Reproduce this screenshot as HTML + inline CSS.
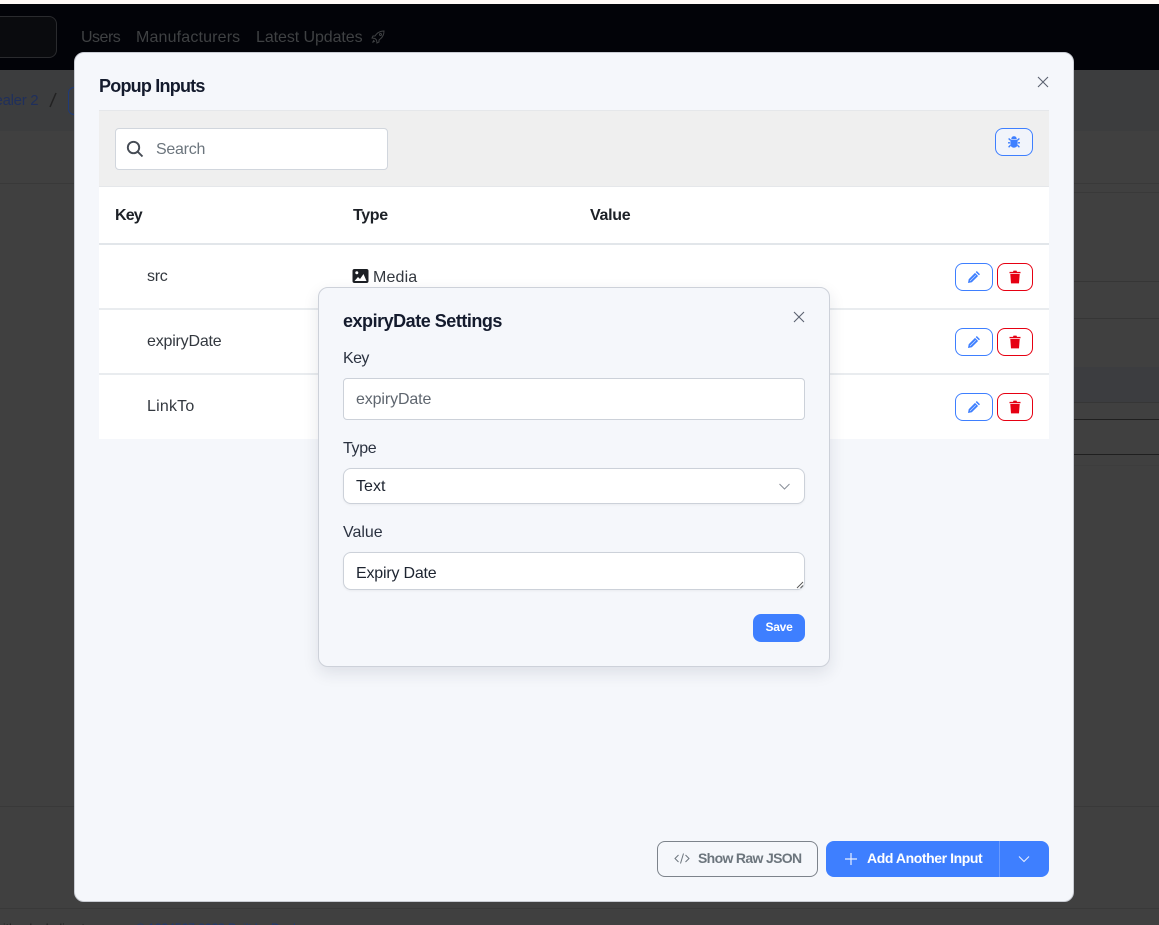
<!DOCTYPE html>
<html><head><meta charset="utf-8"><style>
html,body{margin:0;padding:0;width:1159px;height:925px;overflow:hidden;background:#404040}
body{position:relative;font-family:"Liberation Sans",sans-serif;font-size:16px;color:#212529}
.a,.t{position:absolute}
.t{white-space:nowrap;line-height:20px}
svg{display:block;position:absolute}
.bg{position:absolute;left:0;width:1159px}
.btn{position:absolute;box-sizing:border-box;background:#fff;width:38px;height:28px;border-radius:8px}
.blue{border:1px solid #3e7fff}
.red{border:1px solid #e60012}
.hr{position:absolute;left:99px;width:950px;height:2px;background:#e9ecef}
.lab{color:#2b3240;font-size:16px}
</style></head><body>
<div class="bg" style="top:0;height:4px;background:#fffaf6"></div>
<div class="bg" style="top:4px;height:66px;background:#020308"></div>
<div class="a" style="left:-20px;top:16px;width:75px;height:40px;border:1px solid #2a2b2e;border-radius:8px;background:#0a0b0e"></div>
<div class="t" style="left:81px;top:28px;color:#3f4143;letter-spacing:-.5px">Users</div>
<div class="t" style="left:136px;top:28px;color:#3f4143;letter-spacing:.16px">Manufacturers</div>
<div class="t" style="left:256px;top:28px;color:#3f4143;letter-spacing:-.08px">Latest Updates</div>
<svg style="left:371px;top:30px" width="14" height="14" viewBox="0 0 14 14" fill="none" stroke="#3f4143" stroke-width="1"><path d="M13 1C9 1 6 3 4 6L2 6 1 8 4 8.500 5.500 10 6 13 8 12 8 10C11 8 13 5 13 1Z"/><circle cx="9.500" cy="4.500" r="1"/><path d="M3 10 1.500 12.500 4 11"/></svg>
<div class="bg" style="top:70px;height:61px;background:#3c3d3e"></div>
<div class="t" style="left:-16px;top:91px;font-size:15px;color:#1f2f5c;letter-spacing:-.3px">Dealer 2</div>
<svg style="left:48px;top:91px" width="10" height="18" viewBox="0 0 10 18"><path d="M2 16 8 2" stroke="#222" stroke-width="1.500"/></svg>
<div class="a" style="left:68px;top:87px;width:20px;height:26px;border:1px solid #1f3a78;border-radius:6px"></div>
<div class="bg" style="top:183px;height:1px;background:#393939"></div>
<div class="bg" style="left:1074px;width:85px;top:192px;height:1px;background:#393939"></div>
<div class="bg" style="left:1074px;width:85px;top:281px;height:1px;background:#363636"></div>
<div class="bg" style="left:1074px;width:85px;top:318px;height:1px;background:#363636"></div>
<div class="bg" style="left:1074px;width:85px;top:367px;height:35px;background:#3c3d40"></div>
<div class="bg" style="left:1074px;width:85px;top:402px;height:1px;background:#363636"></div>
<div class="bg" style="left:1074px;width:85px;top:419px;height:1px;background:#1f1f1f"></div>
<div class="bg" style="left:1074px;width:85px;top:454px;height:1px;background:#1f1f1f"></div>
<div class="bg" style="left:1074px;width:85px;top:465px;height:1px;background:#3d3d3d"></div>
<div class="bg" style="top:806px;height:1px;background:#393939"></div>
<div class="bg" style="top:908px;height:1px;background:#393939"></div>
<div class="t" style="left:3px;top:918px;font-size:12px;color:#222">ith <span style="color:#111">&#9829;</span> by Indigo team</div>
<div class="t" style="left:136px;top:918px;font-size:12px;color:#1f3a78">© 1234567 2023 Built by Dealer</div>

<!-- Main modal -->
<div class="a" style="left:74px;top:52px;width:1000px;height:850px;box-sizing:border-box;background:#f5f7fb;border:1px solid #c9ccd3;border-radius:10px"></div>
<div class="t" style="left:99px;top:76px;font-size:18px;font-weight:bold;color:#141b2d;letter-spacing:-.78px">Popup Inputs</div>
<svg style="left:1037px;top:76px" width="12" height="12" viewBox="0 0 12 12"><path d="M1 1 11 11M11 1 1 11" stroke="#5b6270" stroke-width="1.100"/></svg>

<div class="a" style="left:99px;top:110px;width:950px;height:77px;background:#efefef;border-top:1px solid #e5e7ea;box-sizing:border-box;border-bottom:1px solid #e5e7ea"></div>
<div class="a" style="left:115px;top:128px;width:273px;height:42px;box-sizing:border-box;background:#fff;border:1px solid #d1d6dd;border-radius:4px"></div>
<svg style="left:126px;top:140px" width="18" height="18" viewBox="0 0 18 18" fill="none" stroke="#454b54" stroke-width="1.900"><circle cx="7.500" cy="7.500" r="5.700"/><path d="M11.800 11.800 16.500 16.500"/></svg>
<div class="t" style="left:156px;top:140px;color:#6c757d;letter-spacing:-.27px">Search</div>
<div class="btn blue" style="left:995px;top:128px;background:#f1f4fb"></div>
<svg style="left:1007px;top:135px" width="14" height="14" viewBox="0 0 14 14" fill="#3e7fff"><path d="M4.300 4C4.300 2.200 5.400 1.200 7 1.200S9.700 2.200 9.700 4Z"/><path d="M3.400 4.600H10.600V9.200C10.600 11.200 9 12.700 7 12.700S3.400 11.200 3.400 9.200Z"/><path d="M3.500 5.300 1.600 3.500M10.500 5.300 12.400 3.500M3 7.800H1M11 7.800H13M3.500 10.300 1.600 12.200M10.500 10.300 12.400 12.200" stroke="#3e7fff" stroke-width="1.400" fill="none"/></svg>

<div class="a" style="left:99px;top:187px;width:950px;height:252px;background:#fff"></div>
<div class="t" style="left:115px;top:206px;font-weight:bold;color:#1d2127;letter-spacing:-.85px">Key</div>
<div class="t" style="left:353px;top:206px;font-weight:bold;color:#1d2127;letter-spacing:-.35px">Type</div>
<div class="t" style="left:590px;top:206px;font-weight:bold;color:#1d2127;letter-spacing:-.3px">Value</div>
<div class="hr" style="top:243px;background:#e2e6ea"></div>
<div class="hr" style="top:308px"></div>
<div class="hr" style="top:373px"></div>

<div class="t" style="left:147px;top:267px;color:#33383f;letter-spacing:-.3px">src</div>
<div class="t" style="left:147px;top:332px;color:#33383f;letter-spacing:-.2px">expiryDate</div>
<div class="t" style="left:147px;top:397px;color:#33383f;letter-spacing:.2px">LinkTo</div>
<svg style="left:352px;top:268px" width="17" height="16" viewBox="0 0 17 16"><rect x="0.500" y="1" width="16" height="14" rx="2" fill="#1c1f24"/><circle cx="4.800" cy="4.800" r="1.500" fill="#fff"/><path d="M2.500 13 6 9 8 11 11.500 6 14.500 13Z" fill="#fff"/></svg>
<div class="t" style="left:373px;top:268px;color:#33383f;letter-spacing:.15px">Media</div>

<div class="btn blue" style="left:955px;top:263px"></div>
<div class="btn red" style="left:997px;top:263px;width:36px"></div>
<div class="btn blue" style="left:955px;top:328px"></div>
<div class="btn red" style="left:997px;top:328px;width:36px"></div>
<div class="btn blue" style="left:955px;top:393px"></div>
<div class="btn red" style="left:997px;top:393px;width:36px"></div>

<svg style="left:967px;top:270px" width="14" height="14" viewBox="0 0 14 14" fill="#3e7fff"><path d="M9.800 1 13 4.200 11.900 5.300 8.700 2.100ZM8 2.900 11.100 6 4.800 12.300 1 13 1.700 9.200Z"/><path d="M3 11 8.800 5.200" stroke="#cfe0ff" stroke-width=".7"/></svg>
<svg style="left:967px;top:335px" width="14" height="14" viewBox="0 0 14 14" fill="#3e7fff"><path d="M9.800 1 13 4.200 11.900 5.300 8.700 2.100ZM8 2.900 11.100 6 4.800 12.300 1 13 1.700 9.200Z"/><path d="M3 11 8.800 5.200" stroke="#cfe0ff" stroke-width=".7"/></svg>
<svg style="left:967px;top:400px" width="14" height="14" viewBox="0 0 14 14" fill="#3e7fff"><path d="M9.800 1 13 4.200 11.900 5.300 8.700 2.100ZM8 2.900 11.100 6 4.800 12.300 1 13 1.700 9.200Z"/><path d="M3 11 8.800 5.200" stroke="#cfe0ff" stroke-width=".7"/></svg>
<svg style="left:1008px;top:270px" width="14" height="14" viewBox="0 0 14 14" fill="#e60012"><path d="M1.500 1.900H5L5.500 .6H8.500L9 1.900H12.500V3.200H1.500ZM2.300 4H11.700L11 13.400H3Z"/></svg>
<svg style="left:1008px;top:335px" width="14" height="14" viewBox="0 0 14 14" fill="#e60012"><path d="M1.500 1.900H5L5.500 .6H8.500L9 1.900H12.500V3.200H1.500ZM2.300 4H11.700L11 13.400H3Z"/></svg>
<svg style="left:1008px;top:400px" width="14" height="14" viewBox="0 0 14 14" fill="#e60012"><path d="M1.500 1.900H5L5.500 .6H8.500L9 1.900H12.500V3.200H1.500ZM2.300 4H11.700L11 13.400H3Z"/></svg>

<!-- Footer buttons -->
<div class="a" style="left:657px;top:841px;width:161px;height:36px;box-sizing:border-box;border:1px solid #7d838b;border-radius:8px"></div>
<svg style="left:674px;top:852px" width="16" height="13" viewBox="0 0 16 13" fill="none" stroke="#6c757d" stroke-width="1"><path d="M4.500 3 1 6.500 4.500 10M11.500 3 15 6.500 11.500 10M9.500 1.500 6.500 11.500"/></svg>
<div class="t" style="left:698px;top:848px;font-size:14px;font-weight:bold;color:#6c757d;letter-spacing:-.66px">Show Raw JSON</div>
<div class="a" style="left:826px;top:841px;width:223px;height:36px;background:#3e7fff;border-radius:8px"></div>
<div class="a" style="left:999px;top:841px;width:1px;height:36px;background:#6a9bff"></div>
<svg style="left:844px;top:852px" width="14" height="14" viewBox="0 0 14 14"><path d="M7 1V13M1 7H13" stroke="#e8efff" stroke-width="1.200"/></svg>
<div class="t" style="left:867px;top:848px;font-size:14px;font-weight:bold;color:#fff;letter-spacing:-.42px">Add Another Input</div>
<svg style="left:1018px;top:855px" width="12" height="8" viewBox="0 0 12 8" fill="none"><path d="M1 1.500 6 6.500 11 1.500" stroke="#e8efff" stroke-width="1.100"/></svg>

<!-- Inner modal -->
<div class="a" style="left:318px;top:287px;width:512px;height:380px;box-sizing:border-box;background:#f5f7fb;border:1px solid #cdd1d9;border-radius:10px;box-shadow:0 6px 16px rgba(30,40,60,.11)"></div>
<div class="t" style="left:343px;top:311px;font-size:18px;font-weight:bold;color:#141b2d;letter-spacing:-.48px">expiryDate Settings</div>
<svg style="left:793px;top:311px" width="12" height="12" viewBox="0 0 12 12"><path d="M1 1 11 11M11 1 1 11" stroke="#5b6270" stroke-width="1.100"/></svg>
<div class="t lab" style="left:343px;top:349px;letter-spacing:-.6px">Key</div>
<div class="a" style="left:343px;top:378px;width:462px;height:42px;box-sizing:border-box;background:#fff;border:1px solid #ccd1d9;border-radius:4px"></div>
<div class="t" style="left:356px;top:390px;color:#5f666f;letter-spacing:-.12px">expiryDate</div>
<div class="t lab" style="left:343px;top:439px;letter-spacing:-.35px">Type</div>
<div class="a" style="left:343px;top:468px;width:462px;height:36px;box-sizing:border-box;background:#fff;border:1px solid #ccd1d9;border-radius:8px;box-shadow:0 1px 2px rgba(0,0,0,.05)"></div>
<div class="t" style="left:356px;top:477px;color:#1d2430;letter-spacing:.05px">Text</div>
<svg style="left:778px;top:482px" width="13" height="9" viewBox="0 0 13 9" fill="none"><path d="M1.500 2 6.500 7 11.500 2" stroke="#8a9099" stroke-width="1"/></svg>
<div class="t lab" style="left:343px;top:523px;letter-spacing:-.02px">Value</div>
<div class="a" style="left:343px;top:552px;width:462px;height:38px;box-sizing:border-box;background:#fff;border:1px solid #ccd1d9;border-radius:8px;box-shadow:0 1px 2px rgba(0,0,0,.05)"></div>
<div class="t" style="left:356px;top:564px;color:#1d2430;letter-spacing:-.2px">Expiry Date</div>
<svg style="left:796px;top:581px" width="8" height="8" viewBox="0 0 8 8"><path d="M1 7 7 1M4.500 7 7 4.500" stroke="#555" stroke-width=".9"/></svg>
<div class="a" style="left:753px;top:614px;width:52px;height:28px;background:#3e7fff;border-radius:8px"></div>
<div class="t" style="left:753px;top:617px;width:52px;text-align:center;font-size:12px;font-weight:bold;color:#fff;letter-spacing:-.25px">Save</div>
</body></html>
